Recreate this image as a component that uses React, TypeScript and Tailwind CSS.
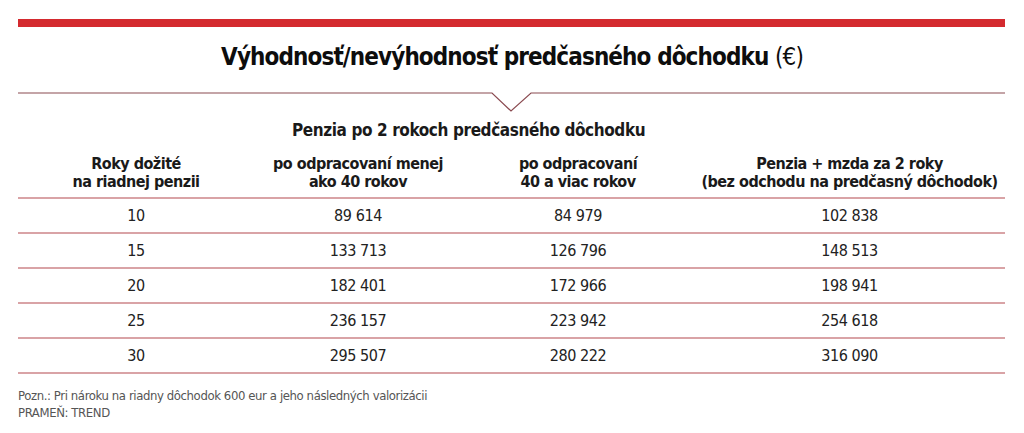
import React from "react";

const rows = [
  { years: "10", a: "89 614", b: "84 979", c: "102 838" },
  { years: "15", a: "133 713", b: "126 796", c: "148 513" },
  { years: "20", a: "182 401", b: "172 966", c: "198 941" },
  { years: "25", a: "236 157", b: "223 942", c: "254 618" },
  { years: "30", a: "295 507", b: "280 222", c: "316 090" },
];

const font = { fontFamily: '"Liberation Sans Narrow", "DejaVu Sans Condensed", "Liberation Sans", sans-serif' };
const cols = "grid grid-cols-[236px_208px_232px_311px]";

export default function App() {
  return (
    <div className="w-[1024px] h-[433px] bg-white pt-[19px] px-[18px] text-[#1a1a1a]" style={font}>
      <div className="h-[8px] w-[987px] bg-[#d42a2f]" />

      <h1 className="mt-[16px] h-[29px] text-center text-[24px] leading-[29px] font-bold tracking-[-0.9px] text-[#0d0d0d]">
        Výhodnosť/nevýhodnosť predčasného dôchodku <span className="font-normal">(€)</span>
      </h1>

      {/* divider with notch */}
      <svg width="987" height="22" className="mt-[20px] block overflow-visible" viewBox="0 0 987 22">
        <polyline
          points="0,1 474,1 493,19 513,1 987,1"
          fill="none"
          stroke="#8a4a50"
          strokeWidth="1.2"
        />
      </svg>

      <div className="mt-[7px] w-[987px]">
        <div className={`${cols} text-[17px] leading-[18px] font-bold tracking-[-0.4px] text-[#1a1a1a]`}>
          <div />
          <div className="col-span-2 pl-[38px] text-left whitespace-nowrap">Penzia po 2 rokoch predčasného dôchodku</div>
          <div />
        </div>
        <div
          className={`${cols} mt-[16px] pb-[6px] border-b-2 border-[#d9a3a6] text-[16px] leading-[18px] font-bold tracking-[-0.5px] text-center whitespace-nowrap`}
        >
          <div>
            Roky dožité
            <br />
            na riadnej penzii
          </div>
          <div>
            po odpracovaní menej
            <br />
            ako 40 rokov
          </div>
          <div>
            po odpracovaní
            <br />
            40 a viac rokov
          </div>
          <div>
            Penzia + mzda za 2 roky
            <br />
            (bez odchodu na predčasný dôchodok)
          </div>
        </div>
        {rows.map((r) => (
          <div
            key={r.years}
            className={`${cols} h-[35px] items-center border-b-2 border-[#d9a3a6] text-[16px] tracking-[-0.4px] text-center text-[#222]`}
          >
            <div>{r.years}</div>
            <div>{r.a}</div>
            <div>{r.b}</div>
            <div>{r.c}</div>
          </div>
        ))}
      </div>

      <div className="mt-[13px] text-[13px] leading-[17px] tracking-[-0.4px] text-[#555]">
        <div>Pozn.: Pri nároku na riadny dôchodok 600 eur a jeho následných valorizácii</div>
        <div>PRAMEŇ: TREND</div>
      </div>
    </div>
  );
}
